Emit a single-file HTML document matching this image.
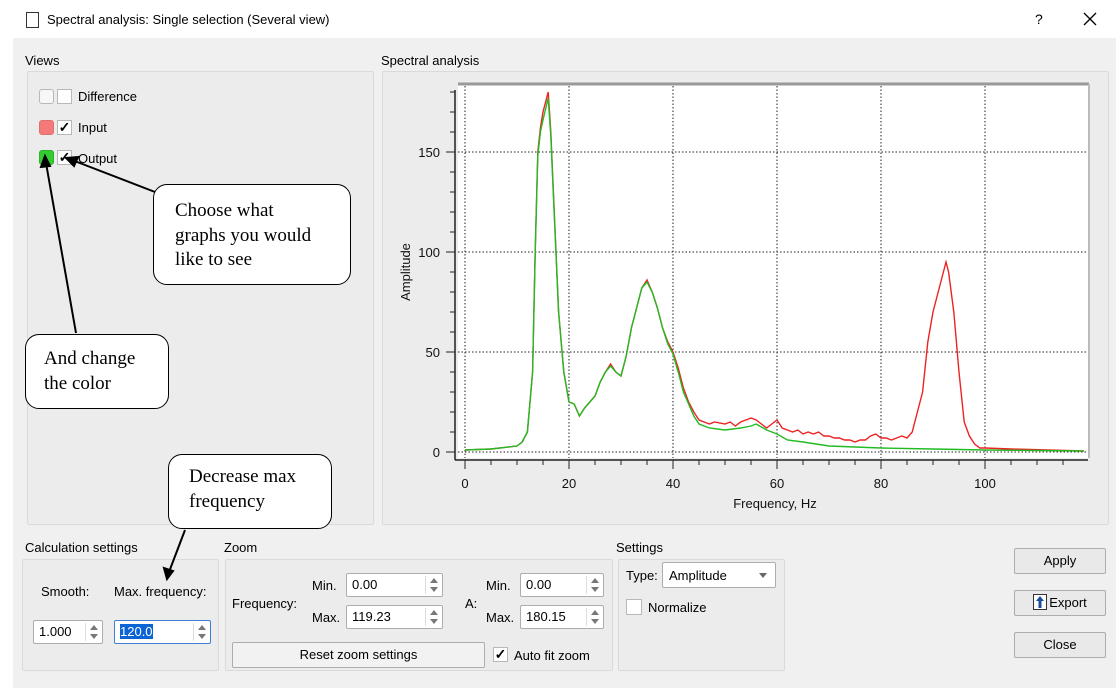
<!DOCTYPE html>
<html><head><meta charset="utf-8">
<style>
*{box-sizing:border-box}
body{margin:0;width:1116px;height:688px;background:#fff;position:relative;overflow:hidden;font-family:"Liberation Sans",sans-serif;font-size:13px;color:#000}
.a{position:absolute}
.bg{left:13px;top:38px;width:1103px;height:650px;background:#f0f0f0}
.gb{position:absolute;border:1px solid #dadada;background:#ececec;border-radius:2px}
.lbl{position:absolute;font-size:13px}
.cb{position:absolute;width:15px;height:15px;border:1px solid #b8b8b8;background:#fff;font-size:14px;line-height:13px;text-align:center;font-weight:bold}
.sp{position:absolute;height:24px;border:1px solid #adadad;background:#fff;border-radius:2px;padding:3px 5px;font-size:13px}
.sp:after{content:"";position:absolute;right:4px;top:4px;width:0;height:0;border:4px solid transparent;border-bottom:5px solid #777;border-top:0}
.sp:before{content:"";position:absolute;right:4px;bottom:4px;width:0;height:0;border:4px solid transparent;border-top:5px solid #777;border-bottom:0}
.spd{position:absolute;right:16px;top:2px;bottom:2px;border-left:1px solid #ddd}
.btn{position:absolute;border:1px solid #adadad;background:#e9e9e9;border-radius:2px;text-align:center;font-size:13px}
.call{position:absolute;background:#fff;border:1.3px solid #000;border-radius:14px;font-family:"Liberation Serif",serif;font-size:19px;line-height:24.5px}
</style></head><body>
<div class="a" style="left:26px;top:12px;width:13px;height:16px;border:1px solid #333"></div>
<div class="a" style="left:47px;top:12px;font-size:13px">Spectral analysis: Single selection (Several view)</div>
<div class="a" style="left:1035px;top:11px;font-size:14px">?</div>
<svg class="a" style="left:1083px;top:12px" width="14" height="14"><path d="M1 1L13 13M13 1L1 13" stroke="#000" stroke-width="1.3"/></svg>
<div class="a bg"></div>

<div class="lbl" style="left:25px;top:53px">Views</div>
<div class="gb" style="left:27px;top:71px;width:347px;height:454px"></div>
<div class="cb" style="left:39px;top:89px;border-radius:3px;background:#f7f7f7"></div>
<div class="cb" style="left:57px;top:89px"></div>
<div class="lbl" style="left:78px;top:89px">Difference</div>
<div class="cb" style="left:39px;top:120px;border-radius:3px;background:#f47a7a;border-color:#e07070"></div>
<div class="cb" style="left:57px;top:120px">✓</div>
<div class="lbl" style="left:78px;top:120px">Input</div>
<div class="cb" style="left:39px;top:150px;border-radius:3px;background:#33cc33;border-color:#2bb02b"></div>
<div class="cb" style="left:57px;top:150px">✓</div>
<div class="lbl" style="left:78px;top:151px">Output</div>

<div class="lbl" style="left:381px;top:53px">Spectral analysis</div>
<div class="gb" style="left:382px;top:71px;width:727px;height:454px"></div>

<svg class="a" style="left:0;top:0" width="1116" height="688">
<rect x="458" y="84" width="630" height="374" fill="#fff"/>
<line x1="458" y1="84" x2="1089" y2="84" stroke="#999" stroke-width="3"/>
<line x1="1089" y1="84" x2="1089" y2="458" stroke="#bbb" stroke-width="2"/>
<g stroke="#222" stroke-width="1" stroke-dasharray="1.5,2">
<line x1="465" y1="86" x2="465" y2="458"/><line x1="569" y1="86" x2="569" y2="458"/><line x1="673" y1="86" x2="673" y2="458"/><line x1="777" y1="86" x2="777" y2="458"/><line x1="881" y1="86" x2="881" y2="458"/><line x1="985" y1="86" x2="985" y2="458"/>
<line x1="458" y1="452" x2="1088" y2="452"/><line x1="458" y1="352" x2="1088" y2="352"/><line x1="458" y1="252" x2="1088" y2="252"/><line x1="458" y1="152" x2="1088" y2="152"/>
</g>
<line x1="455" y1="90" x2="455" y2="460" stroke="#222" stroke-width="1.5"/>
<line x1="455" y1="460" x2="1088" y2="460" stroke="#222" stroke-width="1.5"/>
<g id="ticks" stroke="#222" stroke-width="1"></g>
<polyline id="red" fill="none" stroke="#ee2222" stroke-width="1.4"/>
<polyline id="grn" fill="none" stroke="#22bb22" stroke-width="1.4"/>
<g font-family="Liberation Sans, sans-serif" font-size="13" fill="#111">
<text x="440" y="157" text-anchor="end">150</text><text x="440" y="257" text-anchor="end">100</text><text x="440" y="357" text-anchor="end">50</text><text x="440" y="457" text-anchor="end">0</text>
<text x="465" y="488" text-anchor="middle">0</text><text x="569" y="488" text-anchor="middle">20</text><text x="673" y="488" text-anchor="middle">40</text><text x="777" y="488" text-anchor="middle">60</text><text x="881" y="488" text-anchor="middle">80</text><text x="985" y="488" text-anchor="middle">100</text>
<text x="775" y="508" text-anchor="middle">Frequency, Hz</text>
<text transform="translate(410,272) rotate(-90)" text-anchor="middle">Amplitude</text>
</g>
</svg>

<div class="call" style="left:153px;top:184px;width:198px;height:101px;padding:14px 0 0 21px">Choose what<br>graphs you would<br>like to see</div>
<div class="call" style="left:25px;top:334px;width:144px;height:75px;padding:12px 0 0 18px">And change<br>the color</div>
<div class="call" style="left:168px;top:454px;width:164px;height:75px;padding:10px 0 0 20px">Decrease max<br>frequency</div>

<div class="lbl" style="left:25px;top:540px">Calculation settings</div>
<div class="gb" style="left:22px;top:559px;width:197px;height:112px"></div>
<div class="lbl" style="left:41px;top:584px">Smooth:</div>
<div class="lbl" style="left:114px;top:584px">Max. frequency:</div>
<div class="sp" style="left:33px;top:620px;width:70px">1.000<div class="spd"></div></div>
<div class="sp" style="left:114px;top:620px;width:97px;border-color:#3c7fd8"><span style="background:#0a64d6;color:#fff">120.0</span><div class="spd"></div></div>

<div class="lbl" style="left:224px;top:540px">Zoom</div>
<div class="gb" style="left:225px;top:559px;width:388px;height:112px"></div>
<div class="lbl" style="left:232px;top:596px">Frequency:</div>
<div class="lbl" style="left:312px;top:578px">Min.</div>
<div class="lbl" style="left:312px;top:610px">Max.</div>
<div class="sp" style="left:346px;top:573px;width:97px">0.00<div class="spd"></div></div>
<div class="sp" style="left:346px;top:605px;width:97px">119.23<div class="spd"></div></div>
<div class="lbl" style="left:465px;top:596px">A:</div>
<div class="lbl" style="left:486px;top:578px">Min.</div>
<div class="lbl" style="left:486px;top:610px">Max.</div>
<div class="sp" style="left:520px;top:573px;width:84px">0.00<div class="spd"></div></div>
<div class="sp" style="left:520px;top:605px;width:84px">180.15<div class="spd"></div></div>
<div class="btn" style="left:232px;top:642px;width:253px;height:26px;line-height:24px;background:#f2f2f2">Reset zoom settings</div>
<div class="cb" style="left:493px;top:647px">✓</div>
<div class="lbl" style="left:514px;top:648px">Auto fit zoom</div>

<div class="lbl" style="left:616px;top:540px">Settings</div>
<div class="gb" style="left:618px;top:559px;width:167px;height:112px"></div>
<div class="lbl" style="left:626px;top:568px">Type:</div>
<div class="a" style="left:662px;top:562px;width:114px;height:26px;border:1px solid #adadad;background:#fff;border-radius:2px;padding:5px 6px">Amplitude<span style="position:absolute;right:8px;top:10px;border:4px solid transparent;border-top:5px solid #666"></span></div>
<div class="cb" style="left:626px;top:599px;width:16px;height:16px"></div>
<div class="lbl" style="left:648px;top:600px">Normalize</div>

<div class="btn" style="left:1014px;top:548px;width:92px;height:26px;line-height:24px">Apply</div>
<div class="btn" style="left:1014px;top:590px;width:92px;height:26px;line-height:24px"><svg width="14" height="16" style="vertical-align:-3px;margin-right:2px"><rect x="0.5" y="0.5" width="13" height="15" fill="#fff" stroke="#333"/><path d="M7 2L11 7H8.5V14H5.5V7H3Z" fill="#1a4e9a"/></svg>Export</div>
<div class="btn" style="left:1014px;top:632px;width:92px;height:26px;line-height:24px">Close</div>

<svg class="a" style="left:0;top:0;pointer-events:none" width="1116" height="688">
<g stroke="#000" stroke-width="2" fill="#000">
<line x1="155" y1="192" x2="72" y2="160"/><polygon points="66,158 78,157 74,166"/>
<line x1="76" y1="333" x2="46" y2="163"/><polygon points="45,156 41,167 50,166"/>
<line x1="185" y1="530" x2="169" y2="572"/><polygon points="167,579 164,568 173,571"/>
</g>
</svg>

<script>
function X(f){return 465+f*5.2}function Y(a){return 452-a*2}
var r=[[0,1],[5,1.5],[10,3],[11,5],[12,10],[13,40],[13.5,100],[14,150],[14.5,162],[15,170],[16,180],[16.5,160],[17,130],[18,70],[19,40],[20,25],[21,24],[22,18],[23,22],[24,25],[25,28],[26,35],[27,40],[28,44],[29,40],[30,38],[31,48],[32,62],[33,72],[34,82],[35,86],[36,80],[37,72],[38,62],[39,55],[40,50],[41,42],[42,32],[43,25],[44,20],[45,16],[46,15],[47,14],[48,15],[50,14],[51,15],[52,13],[53,15],[54,16],[55,17],[56,16],[57,14],[58,12],[59,14],[60,16],[61,12],[62,11],[63,10],[64,11],[65,9],[66,10],[67,9],[68,10],[69,8],[70,8],[71,7],[72,7],[73,6],[74,6],[75,5],[76,6],[77,6],[78,8],[79,9],[80,7],[81,7],[82,6],[83,7],[84,8],[85,7],[86,10],[87,20],[88,30],[89,55],[90,70],[91,80],[92,90],[92.5,95],[93,90],[94,70],[95,40],[96,15],[97,8],[98,4],[99,2],[100,2],[105,1.5],[119,0.5]];
var g=[[0,1],[5,1.5],[10,3],[11,5],[12,10],[13,40],[13.5,100],[14,148],[14.5,160],[15,166],[16,177],[16.5,158],[17,128],[18,70],[19,40],[20,25],[21,24],[22,18],[23,22],[24,25],[25,28],[26,35],[27,40],[28,43],[29,40],[30,38],[31,48],[32,62],[33,72],[34,82],[35,85],[36,80],[37,72],[38,62],[39,54],[40,49],[41,40],[42,30],[43,24],[44,18],[45,14],[47,12],[50,11],[53,12],[55,13],[56,14],[58,11],[60,9],[62,6],[65,5],[70,3],[80,2],[90,1.5],[100,1],[119,0.5]];
document.getElementById('red').setAttribute('points',r.map(p=>X(p[0])+','+Y(p[1])).join(' '));
document.getElementById('grn').setAttribute('points',g.map(p=>X(p[0])+','+Y(p[1])).join(' '));
var t='';for(var f=0;f<=118;f+=5){var L=f%20==0?9:5;t+='<line x1="'+X(f)+'" y1="460" x2="'+X(f)+'" y2="'+(460+L)+'"/>';}
for(var a=0;a<=180;a+=10){var L=a%50==0?9:5;t+='<line x1="'+(455-L)+'" y1="'+Y(a)+'" x2="455" y2="'+Y(a)+'"/>';}
document.getElementById('ticks').innerHTML=t;
</script>
</body></html>
